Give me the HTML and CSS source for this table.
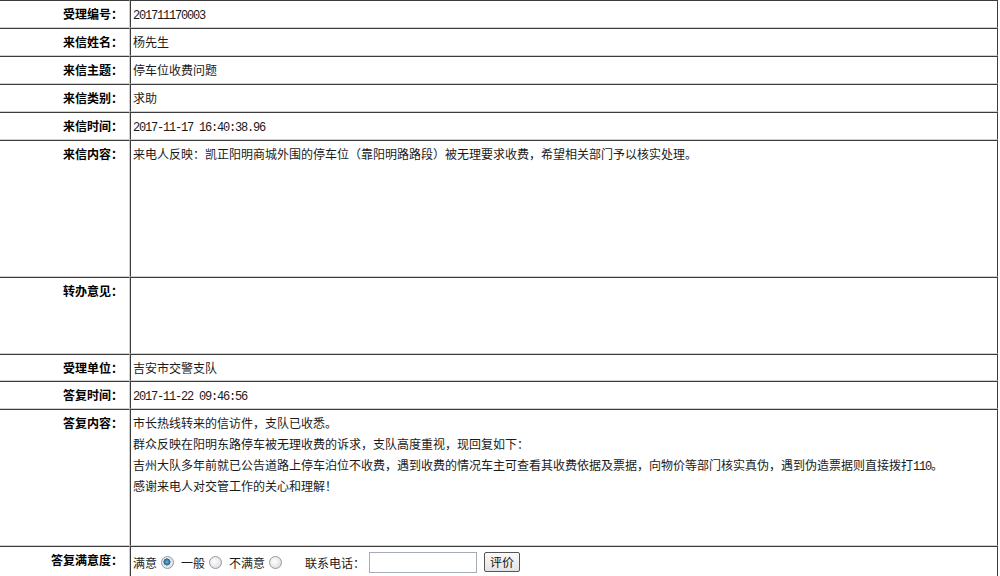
FILE: index.html
```html
<!DOCTYPE html>
<html lang="zh-CN">
<head>
<meta charset="utf-8">
<title>来信详情</title>
<link rel="stylesheet" href="styles.css">
</head>
<body>
<div class="form">
  <div class="lab">受理编号：</div>
  <div class="val"><span class="num">201711170003</span></div>

  <div class="lab">来信姓名：</div>
  <div class="val">杨先生</div>

  <div class="lab">来信主题：</div>
  <div class="val">停车位收费问题</div>

  <div class="lab">来信类别：</div>
  <div class="val">求助</div>

  <div class="lab">来信时间：</div>
  <div class="val"><span class="num">2017-11-17 16:40:38.96</span></div>

  <div class="lab">来信内容：</div>
  <div class="val">来电人反映：凯正阳明商城外围的停车位（靠阳明路路段）被无理要求收费，希望相关部门予以核实处理。</div>

  <div class="lab">转办意见：</div>
  <div class="val"></div>

  <div class="lab">受理单位：</div>
  <div class="val">吉安市交警支队</div>

  <div class="lab">答复时间：</div>
  <div class="val"><span class="num">2017-11-22 09:46:56</span></div>

  <div class="lab">答复内容：</div>
  <div class="val">
    <div>市长热线转来的信访件，支队已收悉。</div>
    <div>群众反映在阳明东路停车被无理收费的诉求，支队高度重视，现回复如下：</div>
    <div>吉州大队多年前就已公告道路上停车泊位不收费，遇到收费的情况车主可查看其收费依据及票据，向物价等部门核实真伪，遇到伪造票据则直接拨打<span class="num">110</span>。</div>
    <div>感谢来电人对交管工作的关心和理解！</div>
  </div>

  <div class="lab">答复满意度：</div>
  <div class="val rate">
    <span>满意</span><input class="radio" type="radio" name="sat" checked>
    <span>一般</span><input class="radio" type="radio" name="sat">
    <span>不满意</span><input class="radio" type="radio" name="sat">
    <span class="phone">联系电话：</span><input class="tel" type="text">
    <button class="btn" type="button">评价</button>
  </div>
</div>
</body>
</html>
```

FILE: styles.css
```css
* { box-sizing: border-box; }

html, body {
  margin: 0;
  padding: 0;
  background: #ffffff;
}

body {
  font-family: "Noto Sans CJK SC", "Liberation Sans", sans-serif;
  font-size: 12px;
  color: #111;
  overflow: hidden;
}

.form {
  display: grid;
  grid-template-columns: 130px 868px;
  grid-template-rows: 28px 28px 28px 28px 28px 137px 77px 27px 28px 137px 32px;
  width: 998px;
}

.lab, .val {
  overflow: hidden;
  line-height: 21px;
  padding: 2px 0 3px 0;
  border-top: 1px solid #3c3c3c;
  border-bottom: 1px solid #cfcfcf;
}

.lab {
  text-align: right;
  font-weight: bold;
  padding-right: 6px;
  border-right: 1px solid #cfcfcf;
  color: #000;
}

.val {
  padding-left: 2px;
  border-left: 1px solid #3c3c3c;
  border-right: 1px solid #3c3c3c;
  color: #1a1a1a;
}

.num {
  font-family: "Liberation Mono", "DejaVu Sans Mono", monospace;
  font-size: 12px;
  line-height: 12px;
  letter-spacing: -1.2px;
}

.rate {
  display: flex;
  align-items: center;
  padding-top: 0;
  padding-bottom: 0;
}

.radio {
  appearance: none;
  -webkit-appearance: none;
  flex: none;
  width: 13px;
  height: 13px;
  margin: 0 7px 0 4px;
  border: 1px solid #8f9aa6;
  border-radius: 50%;
  background: radial-gradient(circle at 40% 40%, #ffffff 0%, #e6e6e6 60%, #cfd3d8 100%);
}

.radio:checked {
  background:
    radial-gradient(circle at 45% 45%, #6fb0d4 0%, #25628f 38%, transparent 45%),
    radial-gradient(circle at 40% 40%, #ffffff 0%, #e6e6e6 60%, #cfd3d8 100%);
}

.phone {
  margin-left: 16px;
}

.tel {
  flex: none;
  width: 108px;
  height: 21px;
  margin: 0 0 0 4px;
  border: 1px solid #a5acb5;
  background: #fff;
  padding: 0 2px;
}

.btn {
  flex: none;
  width: 36px;
  height: 20px;
  margin-left: 7px;
  padding: 0;
  border: 1px solid #555;
  border-radius: 2px;
  background: linear-gradient(#fafafa, #e3e3e3);
  font-family: "Noto Sans CJK SC", "Liberation Sans", sans-serif;
  font-size: 12px;
  line-height: 18px;
  color: #111;
}
```
